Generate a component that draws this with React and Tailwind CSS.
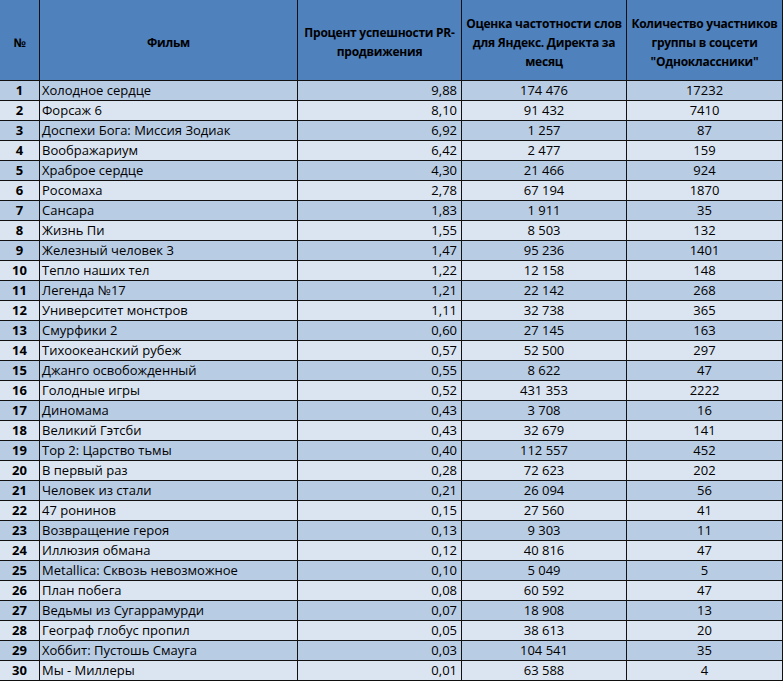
const rows = [
    ['Холодное сердце', '9,88', '174 476', '17232'],
    ['Форсаж 6', '8,10', '91 432', '7410'],
    ['Доспехи Бога: Миссия Зодиак', '6,92', '1 257', '87'],
    ['Воображариум', '6,42', '2 477', '159'],
    ['Храброе сердце', '4,30', '21 466', '924'],
    ['Росомаха', '2,78', '67 194', '1870'],
    ['Сансара', '1,83', '1 911', '35'],
    ['Жизнь Пи', '1,55', '8 503', '132'],
    ['Железный человек 3', '1,47', '95 236', '1401'],
    ['Тепло наших тел', '1,22', '12 158', '148'],
    ['Легенда №17', '1,21', '22 142', '268'],
    ['Университет монстров', '1,11', '32 738', '365'],
    ['Смурфики 2', '0,60', '27 145', '163'],
    ['Тихоокеанский рубеж', '0,57', '52 500', '297'],
    ['Джанго освобожденный', '0,55', '8 622', '47'],
    ['Голодные игры', '0,52', '431 353', '2222'],
    ['Диномама', '0,43', '3 708', '16'],
    ['Великий Гэтсби', '0,43', '32 679', '141'],
    ['Тор 2: Царство тьмы', '0,40', '112 557', '452'],
    ['В первый раз', '0,28', '72 623', '202'],
    ['Человек из стали', '0,21', '26 094', '56'],
    ['47 ронинов', '0,15', '27 560', '41'],
    ['Возвращение героя', '0,13', '9 303', '11'],
    ['Иллюзия обмана', '0,12', '40 816', '47'],
    ['Metallica: Сквозь невозможное', '0,10', '5 049', '5'],
    ['План побега', '0,08', '60 592', '47'],
    ['Ведьмы из Сугаррамурди', '0,07', '18 908', '13'],
    ['Географ глобус пропил', '0,05', '38 613', '20'],
    ['Хоббит: Пустошь Смауга', '0,03', '104 541', '35'],
    ['Мы - Миллеры', '0,01', '63 588', '4'],
];

const Head = ({ children }) => (
    <div className="bg-[#4f81bd] flex items-center justify-center text-center font-bold text-[12px] tracking-[-0.25px] leading-[19px] whitespace-nowrap pt-1">
        <div>{children}</div>
    </div>
);

const App = () => {
    return (
        <div className="w-[783px] h-[681px] bg-[#111] grid grid-cols-[39px_257px_163px_164px_155px] grid-rows-[80px_repeat(30,19px)] gap-px pr-px pb-px text-[13px] text-black font-['Open_Sans',sans-serif]">
            <Head>№</Head>
            <Head>Фильм</Head>
            <Head>Процент успешности PR-<br />продвижения</Head>
            <Head>Оценка частотности слов<br />для Яндекс. Директа за<br />месяц</Head>
            <Head>Количество участников<br />группы в соцсети<br />"Одноклассники"</Head>

            {rows.map((r, i) => {
                const bg = i % 2 === 0 ? 'bg-[#b8cce4]' : 'bg-[#dbe5f1]';
                return [
                    <div key={i + 'n'} className={bg + ' flex items-center justify-center font-bold leading-none'}>{i + 1}</div>,
                    <div key={i + 'f'} className={bg + ' flex items-center pl-[2px] leading-none whitespace-nowrap'}>{r[0]}</div>,
                    <div key={i + 'p'} className={bg + ' flex items-center justify-end pr-[4px] leading-none'}>{r[1]}</div>,
                    <div key={i + 'y'} className={bg + ' flex items-center justify-center leading-none'}>{r[2]}</div>,
                    <div key={i + 'o'} className={bg + ' flex items-center justify-center leading-none'}>{r[3]}</div>,
                ];
            })}
        </div>
    );
};

export default App;
